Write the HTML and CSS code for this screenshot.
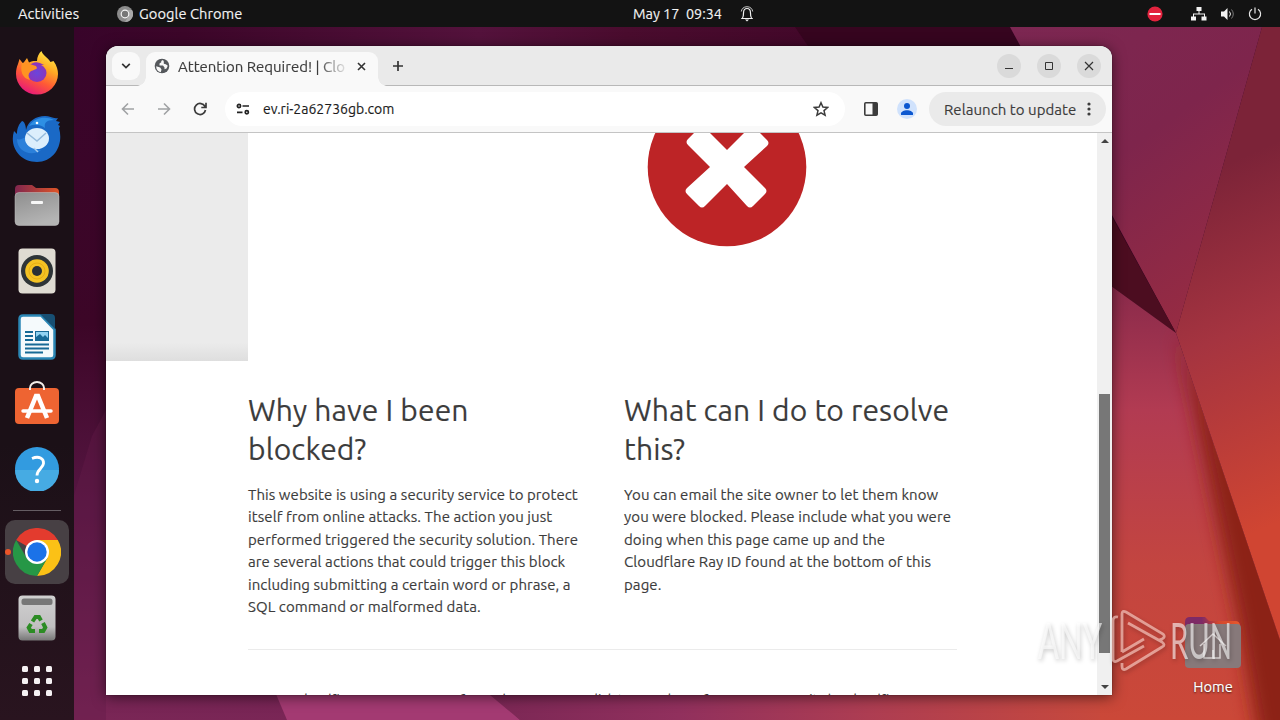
FILE: index.html
```
<!DOCTYPE html>
<html lang="en">
  <head>
    <meta charset="UTF-8" />
    <meta name="viewport" content="width=device-width, initial-scale=1.0" />
    <title>Desktop</title>
    <link rel="stylesheet" href="styles.css" />
  </head>
  <body>
    <svg class="wallpaper" viewBox="0 0 1280 720" preserveAspectRatio="none">
      <defs>
        <linearGradient id="base" x1="0" y1="0" x2="0" y2="1">
          <stop offset="0" stop-color="#38042a" />
          <stop offset="0.45" stop-color="#3c0627" />
          <stop offset="0.7" stop-color="#561642" />
          <stop offset="1" stop-color="#7a2656" />
        </linearGradient>
        <linearGradient id="topBand">
          <stop offset="0" stop-color="#38042a" />
          <stop offset="0.15" stop-color="#3c0629" />
          <stop offset="0.55" stop-color="#54123c" />
          <stop offset="0.75" stop-color="#4a0c2e" />
          <stop offset="1" stop-color="#43082a" />
        </linearGradient>
        <linearGradient id="upper" x1="0" y1="0" x2="0.6" y2="1">
          <stop offset="0" stop-color="#7c2752" />
          <stop offset="0.5" stop-color="#7e254c" />
          <stop offset="1" stop-color="#952b43" />
        </linearGradient>
        <linearGradient id="right" gradientUnits="userSpaceOnUse" x1="1190" y1="180" x2="1330" y2="500">
          <stop offset="0" stop-color="#7c2338" />
          <stop offset="0.45" stop-color="#a53440" />
          <stop offset="1" stop-color="#d04532" />
        </linearGradient>
        <linearGradient id="lower" x1="0" y1="0" x2="0" y2="1">
          <stop offset="0" stop-color="#87294a" />
          <stop offset="0.3" stop-color="#b23b52" />
          <stop offset="0.65" stop-color="#c34540" />
          <stop offset="1" stop-color="#cb4838" />
        </linearGradient>
        <linearGradient id="bottomBand" gradientUnits="userSpaceOnUse" x1="490" y1="0" x2="1120" y2="0">
          <stop offset="0" stop-color="#7b2755" />
          <stop offset="0.3" stop-color="#91305d" />
          <stop offset="0.6" stop-color="#ad3d52" />
          <stop offset="1" stop-color="#c94a3b" />
        </linearGradient>
        <clipPath id="lowerClip">
          <polygon points="1100,278 1176,333 1280,640 1280,720 1100,720" />
        </clipPath>
        <filter id="soft" x="-50%" y="-20%" width="200%" height="140%">
          <feGaussianBlur stdDeviation="9" />
        </filter>
      </defs>
      <rect width="1280" height="720" fill="url(#base)" />
      <rect x="74" y="27" width="736" height="24" fill="url(#topBand)" />
      <polygon points="795,27 1010,27 1176,333 900,180" fill="#36051f" />
      <polygon points="74,495 92,436 106,410 106,720 74,720" fill="#651b49" opacity="0.4" />
      <polygon points="270,680 480,680 520,720 287,720" fill="#a33a72" />
      <polygon points="472,680 1130,680 1130,720 520,720" fill="url(#bottomBand)" />
      <polygon points="1010,27 1262,27 1176,333" fill="url(#upper)" />
      <polygon points="1100,195 1176,333 1100,278" fill="#4c0d20" />
      <polygon points="1262,27 1280,27 1280,640 1176,333" fill="url(#right)" />
      <polygon points="1100,278 1176,333 1280,640 1280,720 1100,720" fill="url(#lower)" />
      <g clip-path="url(#lowerClip)">
        <polygon points="1178,333 1320,640 1320,760 1262,760 1238,620" fill="#8c2019" filter="url(#soft)" />
      </g>
    </svg>

    <div class="topbar">
      <span class="activities">Activities</span>
      <svg class="app-icon" width="16" height="16" viewBox="0 0 16 16">
        <circle cx="8" cy="8" r="8" fill="#8b8b8b" />
        <path d="M8 4h7a8 8 0 0 1-7 12l3.500-6z" fill="#a8a8a8" />
        <circle cx="8" cy="8" r="3.800" fill="#777" stroke="#f4f4f4" stroke-width="1.200" />
      </svg>
      <span class="app-name">Google Chrome</span>
      <span class="clock">May 17&nbsp; 09:34</span>
      <svg class="bell" width="14" height="16" viewBox="0 0 14 16" fill="none" stroke="#f2f2f2">
        <path d="M1.200 12.500h11.600M2.500 12c1-1.400 1-3 1-5C3.500 4 5 2.500 7 2.500s3.500 1.500 3.500 4.500c0 2 0 3.600 1 5" stroke-width="1.200" />
        <path d="M1.300 5.500C1.600 3 3.500 .7 7 .7s5.400 2.300 5.700 4.800" stroke-width=".8" />
        <path d="M5 13.500h4L7 15.500z" fill="#f2f2f2" stroke="none" />
      </svg>
      <div class="tray">
        <svg width="16" height="16" viewBox="0 0 16 16">
          <circle cx="8" cy="8" r="7.600" fill="#e2233e" />
          <rect x="2.500" y="7" width="11" height="2" fill="#fff" />
        </svg>
        <svg class="net" width="16" height="14" viewBox="0 0 16 14" fill="#f2f2f2">
          <path d="M5.500 0h5v4h-5zM0 9.500h5v4H0zM10.500 9.500h5v4h-5zM7.500 4h1v3h-1zM2 6.500h12v3h-1v-2H3v2H2z" />
        </svg>
        <svg class="vol" width="16" height="14" viewBox="0 0 16 14" fill="none">
          <path d="M1 4.500h3L7.500 1v12L4 9.500H1z" fill="#f2f2f2" />
          <path d="M9.500 4.500q2 2.500 0 5" stroke="#f2f2f2" />
          <path d="M11.500 2.500q3.600 4.500 0 9" stroke="#777" />
        </svg>
        <svg width="14" height="14" viewBox="0 0 14 14" fill="none" stroke="#e6e6e6" stroke-width="1.200">
          <path d="M7 .5v6M4 2.200a5.600 5.600 0 1 0 6 0" />
        </svg>
      </div>
    </div>

    <div class="dock">
      <div class="dock-item">
        <svg width="44" height="46" viewBox="0 0 44 46">
          <defs>
            <linearGradient id="ff" x1="0.8" y1="0" x2="0.3" y2="1">
              <stop offset="0" stop-color="#fff14a" />
              <stop offset="0.35" stop-color="#ffa924" />
              <stop offset="0.65" stop-color="#ff5a35" />
              <stop offset="1" stop-color="#e6167d" />
            </linearGradient>
            <radialGradient id="ffCore">
              <stop offset="0" stop-color="#6a45dc" />
              <stop offset="1" stop-color="#8a35bd" />
            </radialGradient>
          </defs>
          <path d="M3 14l1.500-5 3.500 4.500 4-5.500 2 4.500c3-1.500 5-1.800 8-1.500 0-4 2-8 4.500-10 1 4 6 6 9 11l3-1c3.500 5 4.500 9 4.500 13a21 20.500 0 0 1-42 0c0-4 .7-7 2-10z" fill="url(#ff)" />
          <ellipse cx="22" cy="23" rx="9.500" ry="9" fill="url(#ffCore)" />
          <path d="M14 16q6-7 15-1z" fill="#8a35bd" />
          <path d="M7 13c5-1 9 2 14 3l1 2c-1 2-5 2-7 4s-2 5 0 8c-8-2-10-9-8-17z" fill="#ff9322" />
        </svg>
      </div>
      <div class="dock-item">
        <svg width="50" height="48" viewBox="0 0 50 48">
          <path d="M10 6c2 0 4 4 4 9 2-9 10-14 19-14 5 0 8 3 13 2l-2 3 4 1-2 3 2 1-1 2c5 17-5 34-22 34C8 47-3 32 2 16l3 3c0-6 2-10 5-13z" fill="#1a69c6" />
          <path d="M17 11C23 2 34 1 42 5c-8 0-10 3-9 8-5-4-11-4-16-2z" fill="#2e8fe4" />
          <path d="M5 24c0 13 15 18 24 11-8-1-13-6-14-14-4 3-8 4-10 3z" fill="#2b80da" />
          <ellipse cx="25" cy="23.500" rx="12" ry="10.500" fill="#dceefc" />
          <path d="M15 18l10 8 9-8" fill="none" stroke="#96bbdc" stroke-width="1.500" />
          <path d="M22 33l4 4" stroke="#a9cdf0" stroke-width="1.500" />
          <circle cx="25" cy="8" r="1.300" fill="#fff" />
        </svg>
      </div>
      <div class="dock-item">
        <svg width="46" height="42" viewBox="0 0 46 42">
          <defs>
            <linearGradient id="folderBack"><stop offset="0" stop-color="#80264e" /><stop offset="1" stop-color="#df5528" /></linearGradient>
            <linearGradient id="folderFront" x1="0" y1="0" x2="0.4" y2="1"><stop offset="0" stop-color="#8e8e8e" /><stop offset="1" stop-color="#b4b4b4" /></linearGradient>
          </defs>
          <path d="M1 5q0-4 4-4h13l4 3h19q4 0 4 4v12H1z" fill="url(#folderBack)" />
          <rect x="1" y="8.500" width="44" height="33" rx="4" fill="url(#folderFront)" stroke="#c3c3c3" stroke-width=".5" />
          <rect x="17" y="17" width="12" height="3" rx="1" fill="#f7f7f7" />
        </svg>
      </div>
      <div class="dock-item">
        <svg width="38" height="46" viewBox="0 0 38 46">
          <rect x=".5" y=".5" width="37" height="45" rx="4" fill="#dfdbd2" />
          <circle cx="19" cy="23" r="16" fill="#2e3437" />
          <circle cx="19" cy="23" r="11.800" fill="#f4c223" />
          <circle cx="19" cy="23" r="8" fill="none" stroke="#e0a50f" stroke-width=".7" />
          <circle cx="19" cy="23" r="5" fill="#293036" />
        </svg>
      </div>
      <div class="dock-item">
        <svg width="38" height="46" viewBox="0 0 38 46">
          <path d="M5 1.500h18l13.500 14V41q0 3.500-3.500 3.500H5q-3.500 0-3.500-3.500V5q0-3.500 3.500-3.500z" fill="#f5fafc" stroke="#2b87b5" stroke-width="2.500" />
          <path d="M22 0h11q4 0 4 4v11z" fill="#174f73" />
          <path d="M7 18h8M7 22h8M7 26h8M7 30.500h24M7 34.500h24M7 38.500h18" stroke="#176a96" stroke-width="2" />
          <rect x="17.500" y="17.500" width="13" height="9" fill="#90d2f1" stroke="#176a96" />
          <path d="M18 26v-3l4-3 3 3 2-2 3 3v2z" fill="#176a96" />
        </svg>
      </div>
      <div class="dock-item">
        <svg width="46" height="46" viewBox="0 0 46 46">
          <rect x="1" y="8" width="44" height="36" rx="4" fill="#ee6432" />
          <path d="M16 10V8a7 6 0 0 1 14 0v2" fill="none" stroke="#f3eee9" stroke-width="2" />
          <path d="M13 38l9-22h2l9 22" fill="none" stroke="#fff" stroke-width="4.500" />
          <path d="M9 31h28" stroke="#fff" stroke-width="3.500" stroke-linecap="round" />
        </svg>
      </div>
      <div class="dock-item">
        <svg width="44" height="44" viewBox="0 0 44 44">
          <circle cx="22" cy="22" r="22" fill="#329be0" />
          <path d="M0 23h44a22 22 0 0 1-44 0z" fill="#46abe3" />
          <path d="M17 11.500c7-3 12 0 11.500 5-.4 4.500-6.500 6-6.500 12" fill="none" stroke="#fff" stroke-width="2.800" />
          <circle cx="22" cy="34" r="2.200" fill="#fff" />
        </svg>
      </div>
      <div class="dock-line"></div>
      <div class="dock-item active">
        <svg width="48" height="48" viewBox="0 0 48 48">
          <path d="M24 24L3.200 12A24 24 0 0 1 44.800 12z" fill="#e33b2e" />
          <path d="M24 12h20.800A24 24 0 0 1 24 48l10.400-18z" fill="#fbc116" />
          <path d="M3.200 12A24 24 0 0 0 24 48l10.400-18H13.600z" fill="#269746" />
          <circle cx="24" cy="24" r="12" fill="#fff" />
          <circle cx="24" cy="24" r="9.700" fill="#1b72e8" />
        </svg>
      </div>
      <div class="dock-item">
        <svg width="38" height="46" viewBox="0 0 38 46">
          <defs>
            <linearGradient id="bin" x1="0" y1="0" x2="0" y2="1">
              <stop offset="0" stop-color="#d0d0d0" /><stop offset="0.7" stop-color="#c0bfc0" /><stop offset="1" stop-color="#777" />
            </linearGradient>
          </defs>
          <rect x=".5" y=".5" width="37" height="45" rx="4" fill="url(#bin)" />
          <rect x="3.500" y="3.500" width="31" height="6.500" rx="2.500" fill="#777" />
          <g fill="none" stroke="#2c8c24" stroke-width="4">
            <path d="M14.500 26.500l3-4.500h3.500l2 3.500" />
            <path d="M25 28l2.300 4.500-2 3.500H21" />
            <path d="M17 36h-4.500l-1.800-3.500L13 29" />
          </g>
        </svg>
      </div>
      <div class="apps-grid">
        <i></i><i></i><i></i><i></i><i></i><i></i><i></i><i></i><i></i>
      </div>
    </div>

    <div class="home">
      <svg width="58" height="54" viewBox="0 0 58 54">
        <defs>
          <linearGradient id="homeBack"><stop offset="0.300" stop-color="#7e2a66" /><stop offset="0.600" stop-color="#d2472f" /><stop offset="1" stop-color="#e8592c" /></linearGradient>
        </defs>
        <path d="M1 6q0-5 5-5h15l4 4h26q5 0 5 5v12H1z" fill="url(#homeBack)" />
        <rect x="1" y="8" width="56" height="44" rx="4" fill="#87797a" />
        <path d="M16 30l13-12 13 12M20 28v14h16V28M29 34v8" fill="none" stroke="#d9d2d2" stroke-width="1.500" />
      </svg>
      <span>Home</span>
    </div>

    <div class="window">
      <div class="tabstrip">
        <button class="tab-search">
          <svg width="10" height="8" viewBox="0 0 10 8"><path d="M1.200 1.800L5 5.600l3.800-3.800" fill="none" stroke="#333" stroke-width="1.700" /></svg>
        </button>
        <div class="tab">
          <svg width="16" height="16" viewBox="0 0 16 16">
            <circle cx="8" cy="8" r="7.300" fill="#55585c" />
            <path d="M9 2c-1.500.5-2 1-1.700 2.200L5.500 5.500v2H9l1.500 2v1.700l2-.6 1.300-2.800-2-1.500-2-.5V3.500zM2.200 8.200l4 1.300 1.300 2-.7 2.700C4 13.500 2 11.500 2.200 8.200z" fill="#f8f8f8" />
          </svg>
          <span class="tab-title">Attention Required! | Clo</span>
          <svg class="tab-close" width="9" height="9" viewBox="0 0 9 9"><path d="M1 1l7 7M8 1L1 8" stroke="#333" stroke-width="1.600" /></svg>
        </div>
        <svg class="new-tab" width="12" height="12" viewBox="0 0 12 12"><path d="M6 1v10M1 6h10" stroke="#333" stroke-width="1.700" /></svg>
        <div class="controls">
          <button><svg width="10" height="10" viewBox="0 0 10 10"><path d="M1 7.500h8" stroke="#333" /></svg></button>
          <button><svg width="10" height="10" viewBox="0 0 10 10"><path d="M1.500 1.500h7v7h-7z" fill="none" stroke="#333" /></svg></button>
          <button><svg width="10" height="10" viewBox="0 0 10 10"><path d="M1 1l8 8M9 1L1 9" stroke="#333" stroke-width="1.200" /></svg></button>
        </div>
      </div>

      <div class="toolbar">
        <svg class="nav-icon" width="14" height="14" viewBox="0 0 14 14" fill="none" stroke="#a0a2a4" stroke-width="1.600"><path d="M13 7H2M7 1.500L1.500 7 7 12.500" /></svg>
        <svg class="nav-icon" width="14" height="14" viewBox="0 0 14 14" fill="none" stroke="#a0a2a4" stroke-width="1.600"><path d="M1 7h11M7 1.500L12.500 7 7 12.500" /></svg>
        <svg class="nav-icon" width="14" height="14" viewBox="0 0 14 14" fill="none" stroke="#3c3c3c" stroke-width="1.700"><path d="M12 4.500A5.500 5.500 0 1 0 12.500 8M13 .8v4.700H8.300" /></svg>
        <div class="omnibox">
          <svg width="14" height="12" viewBox="0 0 14 12" fill="none" stroke="#222" stroke-width="1.700">
            <circle cx="3" cy="3" r="1.600" /><path d="M6.500 3H13M1 9.300h5.500" /><circle cx="10.800" cy="9.300" r="1.600" />
          </svg>
          <span class="url">ev.ri-2a62736gb.com</span>
          <svg class="star" width="16" height="16" viewBox="0 0 16 16"><path d="M8 1.700l1.900 4.400 4.700.4-3.600 3.100 1.100 4.600L8 11.800l-4.100 2.400L5 9.600 1.400 6.500l4.700-.4z" fill="none" stroke="#3c3c3c" stroke-width="1.500" /></svg>
        </div>
        <svg class="panel" width="14" height="14" viewBox="0 0 14 14"><rect x=".8" y=".8" width="12.400" height="12.400" rx="1" fill="none" stroke="#3c3c3c" stroke-width="1.600" /><path d="M8.500 1H13v12H8.500z" fill="#3c3c3c" /></svg>
        <svg class="profile" width="20" height="20" viewBox="0 0 20 20"><circle cx="10" cy="10" r="10" fill="#d0e2fc" /><circle cx="10" cy="7" r="3" fill="#0b57d0" /><path d="M4 16v-1.500c0-2 3-3.300 6-3.300s6 1.300 6 3.300V16z" fill="#0b57d0" /></svg>
        <div class="relaunch">
          <span>Relaunch to update</span>
          <svg width="4" height="14" viewBox="0 0 4 14" fill="#3c3c3c"><circle cx="2" cy="2" r="1.600" /><circle cx="2" cy="7" r="1.600" /><circle cx="2" cy="12" r="1.600" /></svg>
        </div>
      </div>

      <div class="viewport">
        <div class="page">
          <div class="banner">
            <div class="screenshot">
              <svg width="160" height="160" viewBox="0 0 160 160">
                <circle cx="80" cy="80" r="79.300" fill="#bd2426" />
                <path d="M63 80L41 58q-3-3 0-6l11-11q3-3 6 0l22 22 22-22q3-3 6 0l12 12q3 3 0 6L97 80l21 21q3 3 0 6l-12 12q-3 3-6 0L80 97l-22 22q-3 3-6 0l-12-12q-3-3 0-6z" fill="#fff" />
              </svg>
            </div>
          </div>
          <div class="columns">
            <div class="column">
              <h2>Why have I been<br />blocked?</h2>
              <p>
                This website is using a security service to protect<br />
                itself from online attacks. The action you just<br />
                performed triggered the security solution. There<br />
                are several actions that could trigger this block<br />
                including submitting a certain word or phrase, a<br />
                SQL command or malformed data.
              </p>
            </div>
            <div class="column">
              <h2>What can I do to resolve<br />this?</h2>
              <p>
                You can email the site owner to let them know<br />
                you were blocked. Please include what you were<br />
                doing when this page came up and the<br />
                Cloudflare Ray ID found at the bottom of this<br />
                page.
              </p>
            </div>
          </div>
          <div class="footer">Cloudflare Ray ID: 88512c3f9a6e4b70 • Your IP: Click to reveal • Performance &amp; security by Cloudflare</div>
        </div>
        <div class="scrollbar">
          <i class="arrow up"></i>
          <div class="thumb"></div>
          <i class="arrow down"></i>
        </div>
      </div>
    </div>

    <svg class="watermark" width="220" height="75" viewBox="0 0 220 75">
      <g class="mark-text">
        <text x="2" y="52" textLength="64" lengthAdjust="spacingAndGlyphs">ANY</text>
        <text x="134" y="52" textLength="62" lengthAdjust="spacingAndGlyphs">RUN</text>
      </g>
      <path class="mark-logo" d="M86 45V7q0-4 4-2l37 22q3 3-1 5l-3 1M92 16l34 19q4 3 0 5L90 62q-4 2-4-3v-3M82 10q-5-1-5 4v37q0 5 4 3l27-15M86 45l22-13" />
    </svg>
  </body>
</html>
```
FILE: styles.css
```
* {
  box-sizing: border-box;
}
body {
  margin: 0;
  width: 1280px;
  height: 720px;
  overflow: hidden;
  position: relative;
  font-family: Ubuntu, 'Noto Sans', sans-serif;
  font-size: 15px;
  color: #3c3c3c;
  -webkit-text-stroke: 0.15px;
}
svg {
  display: block;
  flex-shrink: 0;
}
button {
  display: flex;
  align-items: center;
  justify-content: center;
  padding: 0;
  border: none;
}
.wallpaper {
  position: absolute;
  width: 1280px;
  height: 720px;
}
/* top bar */
.topbar {
  position: relative;
  display: flex;
  align-items: center;
  height: 27px;
  padding: 0 18px;
  background: #131313;
  color: #f2f2f2;
  font-size: 14.67px;
  white-space: nowrap;
}
.activities {
  width: 99px;
  letter-spacing: 0.1px;
}
.app-name {
  width: 494px;
  margin-left: 6px;
  letter-spacing: 0.05px;
}
.clock {
  width: 107px;
  font-size: 14.4px;
}
.tray {
  display: flex;
  align-items: center;
  margin-left: auto;
}
.net {
  margin: 0 13px 0 28px;
}
.vol {
  margin-right: 12px;
}
/* dock */
.dock {
  position: relative;
  display: flex;
  flex-direction: column;
  align-items: center;
  width: 74px;
  height: 693px;
  padding-top: 14px;
  background: linear-gradient(#1b1017, #1b1017 60%, #29141f);
}
.dock-item {
  display: flex;
  align-items: center;
  justify-content: center;
  width: 64px;
  height: 64px;
  margin-bottom: 2px;
  flex-shrink: 0;
}
.dock-line {
  width: 48px;
  height: 1px;
  margin: 7px 0 9px;
  background: #655d63;
  flex-shrink: 0;
}
.active {
  position: relative;
  border-radius: 10px;
  background: #474044;
}
.active::before {
  content: '';
  position: absolute;
  left: 0;
  top: 29px;
  width: 6px;
  height: 6px;
  border-radius: 3px;
  background: #ec5428;
}
.apps-grid {
  display: grid;
  grid-template-columns: repeat(3, 6px);
  gap: 6px;
  margin-top: 14px;
}
.apps-grid i {
  width: 6px;
  height: 6px;
  border-radius: 1.5px;
  background: #f5f1f3;
}
.home {
  position: absolute;
  left: 1184px;
  top: 616px;
  display: flex;
  flex-direction: column;
  align-items: center;
  gap: 8px;
  width: 58px;
  color: #fff;
  font-size: 14.67px;
  text-shadow: 0 1px 2px rgba(0, 0, 0, 0.7);
}
/* browser window */
.window {
  position: absolute;
  left: 106px;
  top: 46px;
  width: 1006px;
  height: 649px;
  overflow: hidden;
  display: flex;
  flex-direction: column;
  border-radius: 12px 12px 0 0;
  background: #fff;
  box-shadow: 0 2px 14px rgba(0, 0, 0, 0.55), 0 0 1px #000;
}
.tabstrip {
  display: flex;
  align-items: center;
  height: 40px;
  padding: 0 11px 0 6px;
  background: #eaeaea;
  border-bottom: 1px solid #b8b8b8;
}
.tab-search {
  width: 28px;
  height: 28px;
  border-radius: 9px;
  background: #f9f9f9;
}
.tab {
  position: relative;
  display: flex;
  align-items: center;
  align-self: flex-end;
  width: 232px;
  height: 34px;
  margin: 0 0 -1px 6px;
  padding: 0 0 6px 8px;
  border-radius: 9px 9px 0 0;
  background: #f9f9f9;
}
.tab::before,
.tab::after {
  content: '';
  position: absolute;
  bottom: 0;
  width: 9px;
  height: 9px;
}
.tab::before {
  left: -9px;
  background: radial-gradient(circle at 0 0, transparent 8.5px, #f9f9f9 9px);
}
.tab::after {
  right: -9px;
  background: radial-gradient(circle at 100% 0, transparent 8.5px, #f9f9f9 9px);
}
.tab-title {
  width: 168px;
  margin-left: 8px;
  overflow: hidden;
  white-space: nowrap;
  -webkit-mask-image: linear-gradient(90deg, #000 140px, transparent 171px);
}
.tab-close {
  margin-left: 11px;
}
.new-tab {
  margin-left: 14px;
}
.controls {
  display: flex;
  gap: 16px;
  margin-left: auto;
}
.controls button {
  width: 24px;
  height: 24px;
  border-radius: 50%;
  background: #dadada;
}
.toolbar {
  display: flex;
  align-items: center;
  height: 47px;
  padding: 0 6px 0 15px;
  background: #f9f9f9;
  border-bottom: 1px solid #c4c4c4;
}
.nav-icon {
  margin-right: 22px;
}
.omnibox {
  display: flex;
  align-items: center;
  width: 620px;
  height: 34px;
  margin-left: -4px;
  padding: 0 16px 0 11px;
  border-radius: 17px;
  background: #fff;
}
.url {
  margin-left: 13px;
  font-size: 14px;
  color: #1c1c1c;
}
.star {
  margin-left: auto;
}
.panel {
  margin: 0 19px;
}
.profile {
  margin-right: 12px;
}
.relaunch {
  display: flex;
  align-items: center;
  justify-content: space-between;
  width: 177px;
  height: 34px;
  padding: 0 15px;
  border-radius: 17px;
  background: #eaeaea;
  letter-spacing: 0.05px;
  white-space: nowrap;
}
/* web page */
.viewport {
  display: flex;
  height: 562px;
}
.page {
  flex: 1;
  height: 562px;
  overflow: hidden;
}
.banner {
  width: 142px;
  height: 228px;
  background: linear-gradient(#ebebeb, #ebebeb 92%, #dedede);
}
.screenshot {
  width: 709px;
  height: 228px;
  margin-left: 142px;
  padding-left: 399px;
  clip-path: inset(0);
}
.screenshot svg {
  transform: translateY(-46px);
}
.columns {
  display: flex;
  gap: 44px;
  width: 709px;
  height: 289px;
  margin-left: 142px;
  padding-top: 30px;
  border-bottom: 1px solid #ebebeb;
}
.column {
  width: 332px;
  white-space: nowrap;
}
h2 {
  margin: 0 0 14.5px;
  font-size: 30px;
  line-height: 39px;
  font-weight: 400;
  letter-spacing: 0.12px;
}
p {
  margin: 0;
  line-height: 22.5px;
  letter-spacing: 0.075px;
}
.footer {
  width: 709px;
  margin: 39px 0 0 142px;
  font-size: 13.6px;
  line-height: 20px;
  text-align: center;
  white-space: nowrap;
}
.scrollbar {
  display: flex;
  flex-direction: column;
  align-items: center;
  width: 15px;
  background: #f0f0f0;
}
.arrow {
  border: 4px solid transparent;
}
.up {
  margin-top: 2px;
  border-bottom-color: #444;
}
.thumb {
  width: 11px;
  height: 259px;
  margin-top: 251px;
  background: #777;
}
.down {
  margin-top: 32px;
  border-top-color: #444;
}
/* watermark */
.watermark {
  position: absolute;
  left: 1036px;
  top: 607px;
  filter: drop-shadow(1px 2px 2px rgba(0, 0, 0, 0.35));
}
.mark-text {
  font-family: Lato, sans-serif;
  font-weight: 400;
  font-size: 51px;
  fill: #fff;
  opacity: 0.6;
}
.mark-logo {
  fill: none;
  stroke: rgba(255, 220, 212, 0.6);
  stroke-width: 2.8;
}
```
